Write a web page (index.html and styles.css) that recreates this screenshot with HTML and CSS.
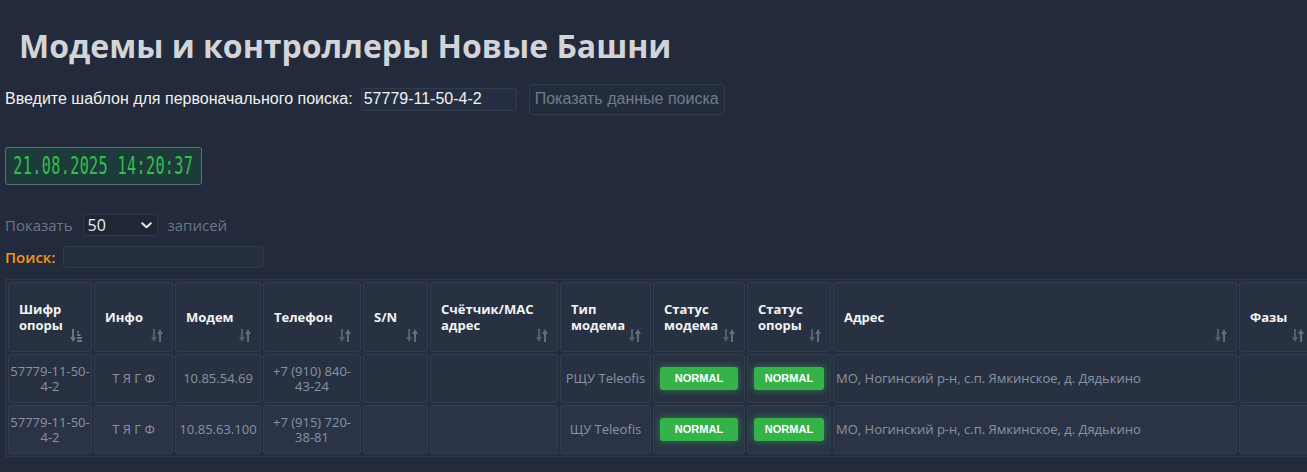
FILE: index.html
```html
<!DOCTYPE html>
<html lang="ru">
<head>
<meta charset="utf-8">
<title>Модемы и контроллеры Новые Башни</title>
<link rel="stylesheet" href="styles.css">
</head>
<body>
<h1 class="title">Модемы и контроллеры Новые Башни</h1>

<div class="query-row">
  <label class="query-label" for="tpl">Введите шаблон для первоначального поиска:</label>
  <input class="query-input" id="tpl" type="text" value="57779-11-50-4-2">
  <button class="query-btn" type="button">Показать данные поиска</button>
</div>

<div class="clock"><span class="clock-text">21.08.2025 14:20:37</span></div>

<div class="length-row">
  <span class="muted">Показать</span>
  <div class="select">
    <span class="select-val">50</span>
    <svg class="chev" width="11" height="7" viewBox="0 0 11 7"><path d="M1.2 1.2 L5.5 5.3 L9.8 1.2" fill="none" stroke="#e8e8e8" stroke-width="2" stroke-linecap="round" stroke-linejoin="round"/></svg>
  </div>
  <span class="muted">записей</span>
</div>

<div class="search-row">
  <span class="search-label">Поиск:</span>
  <input class="search-input" type="text">
</div>

<div class="table-wrap">
<table class="grid">
  <colgroup>
    <col style="width:84px"><col style="width:79px"><col style="width:86px"><col style="width:98px"><col style="width:65px"><col style="width:128px"><col style="width:91px"><col style="width:92px"><col style="width:84px"><col style="width:404px"><col style="width:75px">
  </colgroup>
  <thead>
    <tr>
      <th><span class="th-text">Шифр<br>опоры</span><svg class="sort" width="12" height="13" viewBox="0 0 12 13"><rect x="2" y="0" width="2" height="9" fill="#6b7586"/><polygon points="0,8 6,8 3,13" fill="#6b7586"/><rect x="7" y="2" width="2" height="2" fill="#6b7586"/><rect x="7" y="5" width="3.5" height="2" fill="#6b7586"/><rect x="7" y="8" width="5" height="2" fill="#6b7586"/><rect x="7" y="11" width="5" height="2" fill="#6b7586"/></svg></th>
      <th><span class="th-text">Инфо</span><svg class="sort" width="12" height="13" viewBox="0 0 12 13"><rect x="2" y="0" width="2" height="9" fill="#545f6f"/><polygon points="0,8 6,8 3,13" fill="#545f6f"/><rect x="8" y="4" width="2" height="9" fill="#626d7d"/><polygon points="6,5 12,5 9,0" fill="#626d7d"/></svg></th>
      <th><span class="th-text">Модем</span><svg class="sort" width="12" height="13" viewBox="0 0 12 13"><rect x="2" y="0" width="2" height="9" fill="#545f6f"/><polygon points="0,8 6,8 3,13" fill="#545f6f"/><rect x="8" y="4" width="2" height="9" fill="#626d7d"/><polygon points="6,5 12,5 9,0" fill="#626d7d"/></svg></th>
      <th><span class="th-text">Телефон</span><svg class="sort" width="12" height="13" viewBox="0 0 12 13"><rect x="2" y="0" width="2" height="9" fill="#545f6f"/><polygon points="0,8 6,8 3,13" fill="#545f6f"/><rect x="8" y="4" width="2" height="9" fill="#626d7d"/><polygon points="6,5 12,5 9,0" fill="#626d7d"/></svg></th>
      <th><span class="th-text">S/N</span><svg class="sort" width="12" height="13" viewBox="0 0 12 13"><rect x="2" y="0" width="2" height="9" fill="#545f6f"/><polygon points="0,8 6,8 3,13" fill="#545f6f"/><rect x="8" y="4" width="2" height="9" fill="#626d7d"/><polygon points="6,5 12,5 9,0" fill="#626d7d"/></svg></th>
      <th><span class="th-text">Счётчик/MAC<br>адрес</span><svg class="sort" width="12" height="13" viewBox="0 0 12 13"><rect x="2" y="0" width="2" height="9" fill="#545f6f"/><polygon points="0,8 6,8 3,13" fill="#545f6f"/><rect x="8" y="4" width="2" height="9" fill="#626d7d"/><polygon points="6,5 12,5 9,0" fill="#626d7d"/></svg></th>
      <th><span class="th-text">Тип<br>модема</span><svg class="sort" width="12" height="13" viewBox="0 0 12 13"><rect x="2" y="0" width="2" height="9" fill="#545f6f"/><polygon points="0,8 6,8 3,13" fill="#545f6f"/><rect x="8" y="4" width="2" height="9" fill="#626d7d"/><polygon points="6,5 12,5 9,0" fill="#626d7d"/></svg></th>
      <th><span class="th-text">Статус<br>модема</span><svg class="sort" width="12" height="13" viewBox="0 0 12 13"><rect x="2" y="0" width="2" height="9" fill="#545f6f"/><polygon points="0,8 6,8 3,13" fill="#545f6f"/><rect x="8" y="4" width="2" height="9" fill="#626d7d"/><polygon points="6,5 12,5 9,0" fill="#626d7d"/></svg></th>
      <th><span class="th-text">Статус<br>опоры</span><svg class="sort" width="12" height="13" viewBox="0 0 12 13"><rect x="2" y="0" width="2" height="9" fill="#545f6f"/><polygon points="0,8 6,8 3,13" fill="#545f6f"/><rect x="8" y="4" width="2" height="9" fill="#626d7d"/><polygon points="6,5 12,5 9,0" fill="#626d7d"/></svg></th>
      <th><span class="th-text">Адрес</span><svg class="sort" width="12" height="13" viewBox="0 0 12 13"><rect x="2" y="0" width="2" height="9" fill="#545f6f"/><polygon points="0,8 6,8 3,13" fill="#545f6f"/><rect x="8" y="4" width="2" height="9" fill="#626d7d"/><polygon points="6,5 12,5 9,0" fill="#626d7d"/></svg></th>
      <th><span class="th-text">Фазы</span><svg class="sort" width="12" height="13" viewBox="0 0 12 13"><rect x="2" y="0" width="2" height="9" fill="#545f6f"/><polygon points="0,8 6,8 3,13" fill="#545f6f"/><rect x="8" y="4" width="2" height="9" fill="#626d7d"/><polygon points="6,5 12,5 9,0" fill="#626d7d"/></svg></th>
    </tr>
  </thead>
  <tbody>
    <tr class="odd">
      <td>57779-11-50-4-2</td>
      <td>Т Я Г Ф</td>
      <td>10.85.54.69</td>
      <td>+7 (910) 840-43-24</td>
      <td></td>
      <td></td>
      <td>РЩУ Teleofis</td>
      <td class="badge-cell"><span class="badge">NORMAL</span></td>
      <td class="badge-cell"><span class="badge">NORMAL</span></td>
      <td class="addr">МО, Ногинский р-н, с.п. Ямкинское, д. Дядькино</td>
      <td></td>
    </tr>
    <tr class="even">
      <td>57779-11-50-4-2</td>
      <td>Т Я Г Ф</td>
      <td>10.85.63.100</td>
      <td>+7 (915) 720-38-81</td>
      <td></td>
      <td></td>
      <td>ЩУ Teleofis</td>
      <td class="badge-cell"><span class="badge">NORMAL</span></td>
      <td class="badge-cell"><span class="badge">NORMAL</span></td>
      <td class="addr">МО, Ногинский р-н, с.п. Ямкинское, д. Дядькино</td>
      <td></td>
    </tr>
  </tbody>
</table>
</div>
</body>
</html>
```

FILE: styles.css
```css
html, body {
  margin: 0;
  padding: 0;
  background: #222a3b;
  overflow: hidden;
}
body {
  padding-left: 5px;
  font-family: "Liberation Sans", Arial, sans-serif;
  color: #e6e6e6;
}
.title {
  margin: 26px 0 0 14px;
  font-family: "Open Sans", "Liberation Sans", sans-serif;
  font-weight: 700;
  font-size: 32px;
  line-height: 40px;
  color: #d2d4d8;
  white-space: nowrap;
}
.query-row {
  margin-top: 18px;
  height: 30px;
  display: flex;
  align-items: center;
}
.query-label {
  font-size: 16px;
  color: #f2f2f2;
}
.query-input {
  margin-left: 8px;
  box-sizing: border-box;
  width: 156px;
  height: 23px;
  padding: 0 2px;
  background: #262f41;
  border: 1px solid #313c4e;
  border-radius: 2px;
  color: #f2f2f2;
  font-family: "Liberation Sans", Arial, sans-serif;
  font-size: 16px;
  outline: none;
}
.query-btn {
  margin-left: 12px;
  box-sizing: border-box;
  height: 31px;
  padding: 0 5px;
  background: #232c3d;
  border: 1px solid #323d4e;
  border-radius: 4px;
  color: #717c8b;
  font-family: "Liberation Sans", Arial, sans-serif;
  font-size: 16px;
}
.clock {
  margin-top: 33px;
  box-sizing: border-box;
  width: 197px;
  height: 38px;
  background: #1d3b3b;
  border: 1px solid #5f6e72;
  border-radius: 3px;
  display: flex;
  align-items: center;
  justify-content: center;
  overflow: hidden;
}
.clock-text {
  display: inline-block;
  font-family: "DejaVu Sans Mono", monospace;
  font-size: 23px;
  line-height: 23px;
  color: #33c04c;
  white-space: nowrap;
  transform: scale(0.66, 1.05);
  letter-spacing: 0.5px;
}
.length-row {
  margin-top: 29px;
  height: 22px;
  display: flex;
  align-items: center;
  font-family: "Open Sans", sans-serif;
  font-size: 15px;
}
.muted {
  color: #6c7686;
}
.select {
  margin: 0 10px 0 10px;
  box-sizing: border-box;
  width: 75px;
  height: 22px;
  background: #1f2636;
  border: 1px solid #2e394a;
  border-radius: 3px;
  display: flex;
  align-items: center;
  justify-content: space-between;
  padding: 0 5px 0 4px;
}
.select-val {
  color: #ececec;
  font-size: 16px;
}
.chev {
  display: block;
}
.search-row {
  margin-top: 10px;
  height: 22px;
  display: flex;
  align-items: center;
  font-family: "Open Sans", sans-serif;
}
.search-label {
  color: #f5921e;
  font-size: 15px;
  font-weight: 600;
}
.search-input {
  margin-left: 8px;
  box-sizing: border-box;
  width: 201px;
  height: 22px;
  background: #262f40;
  border: 1px solid #2e394a;
  border-radius: 3px;
  outline: none;
}
.table-wrap {
  margin-top: 11px;
}
.grid {
  box-sizing: border-box;
  width: 1312px;
  table-layout: fixed;
  border-collapse: separate;
  border-spacing: 2px;
  background: #252e3e;
  border: 1px solid #2e3949;
  font-family: "Open Sans", sans-serif;
}
.grid th, .grid td {
  box-sizing: border-box;
  border: 1px solid #323d4f;
  border-radius: 3px;
  background: #283142;
  vertical-align: middle;
}
.grid thead tr {
  height: 70px;
}
.grid th {
  position: relative;
  padding: 0 22px 0 10px;
  text-align: left;
  font-size: 13px;
  font-weight: 700;
  line-height: 16px;
  color: #f3f3f3;
}
.th-text {
  display: block;
}
.sort {
  position: absolute;
  right: 9px;
  bottom: 9px;
}
.grid tbody tr {
  height: 49px;
}
.grid td {
  padding: 0;
  text-align: center;
  font-size: 13px;
  line-height: 15px;
  color: #8a93a1;
}
.grid tr.even td {
  background: #2a3446;
}
.grid td.addr {
  text-align: left;
  padding-left: 2px;
}
.grid td.badge-cell {
  padding: 0 6px;
}
.badge {
  display: block;
  height: 23px;
  line-height: 23px;
  border-radius: 3px;
  background: #36b24a;
  box-shadow: 0 0 7px 1px rgba(54, 190, 80, 0.45);
  color: #ffffff;
  font-family: "Liberation Sans", Arial, sans-serif;
  font-weight: 700;
  font-size: 11px;
  text-align: center;
}
```
